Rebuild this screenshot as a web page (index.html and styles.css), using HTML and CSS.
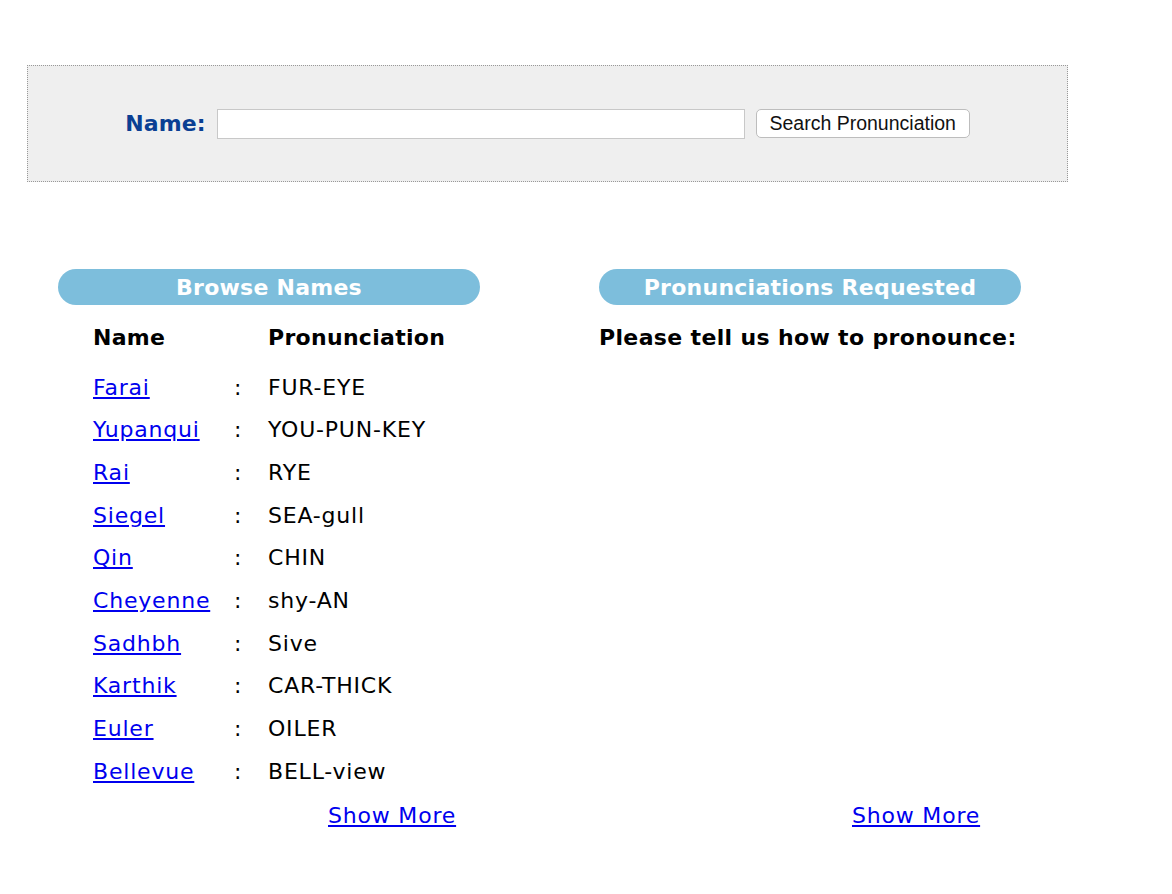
FILE: index.html
```html
<!DOCTYPE html>
<html>
<head>
  <meta charset="UTF-8">
  <title>Name Pronunciation</title>
  <meta name="viewport" content="width=device-width, initial-scale=1">
  <link rel="stylesheet" href="styles.css">
</head>
<body>
  <form class="buscador" onsubmit="return false">
    <label for="nombre">Name:</label>
    <input type="text" id="nombre">
    <button type="submit">Search Pronunciation</button>
  </form>

  <div class="columnas">
    <div class="columna">
      <div class="pildora">Browse Names</div>
      <div class="tabla">
        <div class="cabecera">Name</div><div class="cabecera"></div><div class="cabecera">Pronunciation</div>
        <a href="#">Farai</a><span>:</span><span>FUR-EYE</span>
        <a href="#">Yupanqui</a><span>:</span><span>YOU-PUN-KEY</span>
        <a href="#">Rai</a><span>:</span><span>RYE</span>
        <a href="#">Siegel</a><span>:</span><span>SEA-gull</span>
        <a href="#">Qin</a><span>:</span><span>CHIN</span>
        <a href="#">Cheyenne</a><span>:</span><span>shy-AN</span>
        <a href="#">Sadhbh</a><span>:</span><span>Sive</span>
        <a href="#">Karthik</a><span>:</span><span>CAR-THICK</span>
        <a href="#">Euler</a><span>:</span><span>OILER</span>
        <a href="#">Bellevue</a><span>:</span><span>BELL-view</span>
      </div>
      <a class="mas mas-izq" href="#">Show More</a>
    </div>

    <div class="columna">
      <div class="pildora">Pronunciations Requested</div>
      <div class="pedido">Please tell us how to pronounce:</div>
      <a class="mas mas-der" href="#">Show More</a>
    </div>
  </div>
</body>
</html>
```

FILE: styles.css
```css
body {
  font-family: "DejaVu Sans", Verdana, sans-serif;
  font-size: 22px;
  letter-spacing: 0.8px;
  margin: 0;
  padding: 65px 0 0 27px;
  color: #000;
}
a { color: #0000ee; }

.buscador {
  width: 1039px;
  height: 115px;
  border: 1px dotted #999;
  background: #efefef;
  display: flex;
  align-items: center;
  justify-content: center;
  gap: 11px;
}
.buscador label { font-weight: bold; color: #0a3f93; letter-spacing: 0.1px; }
.buscador input {
  width: 526px;
  height: 28px;
  padding: 0;
  border: 1px solid #c8c8c8;
  background: white;
}
.buscador button {
  font-family: "Liberation Sans", Arial, sans-serif;
  font-size: 19.5px;
  letter-spacing: 0;
  width: 214px;
  height: 29px;
  padding: 0;
  background: white;
  border: 1px solid #bdbdbd;
  border-radius: 5px;
  color: #111;
}

.columnas {
  display: flex;
  gap: 119px;
  margin: 87px 0 0 31px;
}
.columna {
  width: 422px;
  display: flex;
  flex-direction: column;
}
.pildora {
  height: 36px;
  line-height: 37px;
  border-radius: 18px;
  background: #7dbedc;
  color: white;
  font-weight: bold;
  letter-spacing: 0.25px;
  text-align: center;
}

.tabla {
  display: grid;
  grid-template-columns: 141px 34px auto;
  padding-left: 35px;
  line-height: 42.67px;
  margin-top: 12px;
}
.cabecera { font-weight: bold; letter-spacing: 0.3px; margin-bottom: 7px; }

.pedido {
  font-weight: bold;
  letter-spacing: 0.35px;
  line-height: 42px;
  margin-top: 12px;
  white-space: nowrap;
}

.mas {
  margin-top: auto;
  line-height: 42.67px;
  padding-top: 2px;
}
.mas-izq { margin-left: 270px; }
.mas-der { margin-left: 253px; }
```
